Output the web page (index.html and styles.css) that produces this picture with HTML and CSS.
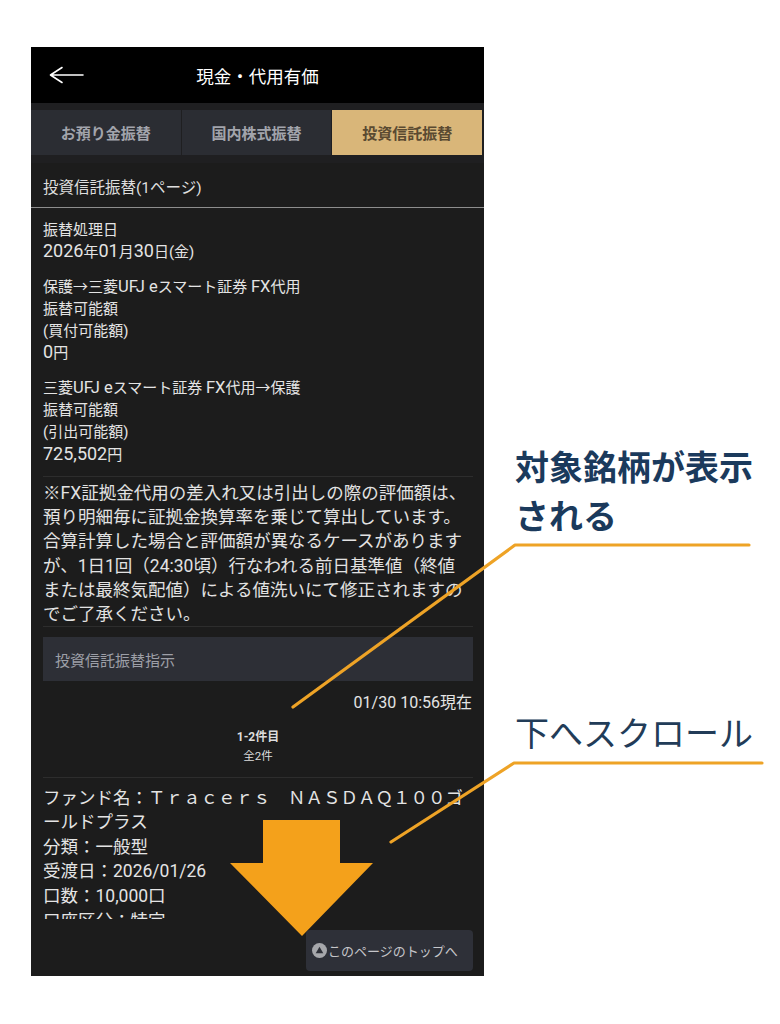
FILE: index.html
```html
<!DOCTYPE html>
<html lang="ja">
<head>
<meta charset="utf-8">
<title>現金・代用有価</title>
<link rel="stylesheet" href="styles.css">
</head>
<body>
<div class="page">
  <div class="phone">
    <header class="appbar">
      <span class="back">
        <svg width="36" height="20" viewBox="0 0 36 20"><path d="M1.5 10 H34 M1.5 10 L13 2.5 M1.5 10 L13 17.5" fill="none" stroke="#ffffff" stroke-width="1.6" stroke-linecap="round"/></svg>
      </span>
      <h1 class="title">現金・代用有価</h1>
      <span></span>
    </header>
    <nav class="tabs">
      <div class="tab">お預り金振替</div>
      <div class="tab">国内株式振替</div>
      <div class="tab tab-active">投資信託振替</div>
    </nav>
    <div class="section-title">投資信託振替(1ページ)</div>
    <main class="scroll">
      <div class="info">
        <p class="block">振替処理日<br><span class="num">2026</span>年<span class="num">01</span>月<span class="num">30</span>日(金)</p>
        <p class="block">保護→三菱<span class="lat">UFJ e</span>スマート証券 <span class="lat">FX</span>代用<br>振替可能額<br>(買付可能額)<br><span class="num">0</span>円</p>
        <p class="block">三菱<span class="lat">UFJ e</span>スマート証券 <span class="lat">FX</span>代用→保護<br>振替可能額<br>(引出可能額)<br><span class="num">725,502</span>円</p>
      </div>
      <hr class="sep">
      <p class="notice">※FX証拠金代用の差入れ又は引出しの際の評価額は、<br>預り明細毎に証拠金換算率を乗じて算出しています。<br>合算計算した場合と評価額が異なるケースがあります<br>が、1日1回（24:30頃）行なわれる前日基準値（終値<br>または最終気配値）による値洗いにて修正されますの<br>でご了承ください。</p>
      <hr class="sep">
      <div class="instr">投資信託振替指示</div>
      <div class="stamp">01/30 10:56現在</div>
      <div class="count"><b>1-2件目</b><br>全2件</div>
      <hr class="sep">
      <p class="fund">ファンド名：Ｔｒａｃｅｒｓ　ＮＡＳＤＡＱ１００ゴ<br>ールドプラス<br>分類：一般型<br>受渡日：2026/01/26<br>口数：10,000口<br>口座区分：特定</p>
    </main>
    <footer class="foot">
      <button class="totop">
        <svg class="totop-icon" width="15" height="15" viewBox="0 0 15 15"><circle cx="7.5" cy="7.5" r="7.5" fill="#a6a7ab"/><path d="M7.5 3.8 L11.3 10.2 H3.7 Z" fill="#2e3038"/></svg>
        <span>このページのトップへ</span>
      </button>
    </footer>
  </div>

  <div class="note note-bold">対象銘柄が表示<br>される</div>
  <div class="note note-light">下へスクロール</div>

  <svg class="overlay" width="780" height="1024" viewBox="0 0 780 1024">
    <polyline points="293,707 515,545 749,545" fill="none" stroke="#eea326" stroke-width="3.2" stroke-linecap="round" stroke-linejoin="round"/>
    <polyline points="391,842 514,763 762,763" fill="none" stroke="#eea326" stroke-width="3.2" stroke-linecap="round" stroke-linejoin="round"/>
    <polygon points="263,820 340,820 340,863 373,863 302,936 230,863 263,863" fill="#f4a11b"/>
  </svg>
</div>
</body>
</html>
```

FILE: styles.css
```css
* { box-sizing: border-box; }

html, body {
  margin: 0;
  padding: 0;
  background: #ffffff;
}

.page {
  position: relative;
  width: 780px;
  height: 1024px;
  overflow: hidden;
  font-family: Roboto, "Noto Sans CJK JP", sans-serif;
}

.phone {
  margin: 47px 0 0 31px;
  width: 453px;
  height: 929px;
  background: #1c1c1c;
  display: flex;
  flex-direction: column;
  color: #e4e4e4;
}

.appbar {
  height: 56px;
  flex: 0 0 56px;
  background: #000000;
  display: grid;
  grid-template-columns: 1fr auto 1fr;
  align-items: center;
}

.back {
  padding-left: 18px;
  display: flex;
  align-items: center;
}

.title {
  margin: 0;
  font-size: 17.5px;
  font-weight: 400;
  color: #ffffff;
  font-family: "Noto Sans CJK JP", sans-serif;
}

.tabs {
  flex: 0 0 60px;
  background: #1f1f21;
  padding: 7px 2px 8px 0;
  display: grid;
  grid-template-columns: 1fr 1fr 1fr;
  gap: 1px;
}

.tab {
  background: #2b2d33;
  color: #a2a4ac;
  font-size: 15px;
  font-weight: 700;
  display: flex;
  align-items: center;
  justify-content: center;
  font-family: "Noto Sans CJK JP", sans-serif;
}

.tab-active {
  background: #d9b679;
  color: #5a4a31;
}

.section-title {
  flex: 0 0 45px;
  height: 45px;
  padding: 1px 12px 0;
  display: flex;
  align-items: center;
  font-size: 15.5px;
  color: #dedede;
  border-bottom: 1px solid #8d8d8d;
  background: #1c1c1c;
}

.scroll {
  flex: 1 1 auto;
  min-height: 0;
  overflow: hidden;
  padding: 0 11px 0 12px;
}

.info {
  padding-top: 11px;
}

.block {
  margin: 0 0 12px;
  font-size: 15px;
  line-height: 22.3px;
  color: #e4e4e4;
}

.block:last-child {
  margin-bottom: 0;
}

.num {
  font-size: 18px;
  line-height: 1;
}

.lat {
  font-size: 16.5px;
  line-height: 1;
}

.sep {
  border: 0;
  height: 1px;
  margin: 10px 0 0;
  background: #2d2d2d;
}

.notice {
  margin: 0;
  padding-top: 4px;
  font-size: 17.5px;
  line-height: 24.2px;
  white-space: nowrap;
  color: #e2e2e2;
}

.notice + .sep {
  margin-top: 0;
}

.instr {
  margin-top: 10px;
  height: 44px;
  padding-left: 12px;
  display: flex;
  align-items: center;
  background: #2d2f36;
  color: #9d9fa7;
  font-size: 15px;
}

.stamp {
  margin-top: 11px;
  padding-right: 1px;
  text-align: right;
  font-size: 16px;
  line-height: 22px;
  color: #e4e4e4;
}

.count {
  margin-top: 13.5px;
  text-align: center;
  font-size: 11.5px;
  line-height: 19px;
  color: #dcdcdc;
}

.count b {
  font-size: 12px;
}

.count + .sep {
  margin-top: 11px;
}

.fund {
  margin: 0;
  padding-top: 8px;
  font-size: 17.5px;
  line-height: 24.6px;
  white-space: nowrap;
  color: #e4e4e4;
}

.foot {
  flex: 0 0 57px;
  display: flex;
  justify-content: flex-end;
  align-items: flex-start;
  padding: 11px 11px 0 0;
}

.totop {
  width: 167px;
  height: 41px;
  border: 0;
  border-radius: 4px;
  background: #2e3038;
  color: #c6c6ca;
  font-family: "Noto Sans CJK JP", sans-serif;
  font-size: 13px;
  display: flex;
  align-items: center;
  gap: 1px;
  padding: 0 0 0 6px;
}

.totop-icon {
  flex: 0 0 15px;
}

.note {
  position: absolute;
  left: 515px;
  font-family: "Noto Sans CJK JP", sans-serif;
  font-size: 34px;
  line-height: 49px;
  color: #1b3a5c;
  white-space: nowrap;
}

.note-bold {
  top: 441px;
  font-weight: 700;
}

.note-light {
  top: 707px;
  font-weight: 400;
  color: #223c58;
}

.overlay {
  position: absolute;
  top: 0;
  left: 0;
  pointer-events: none;
}
```
